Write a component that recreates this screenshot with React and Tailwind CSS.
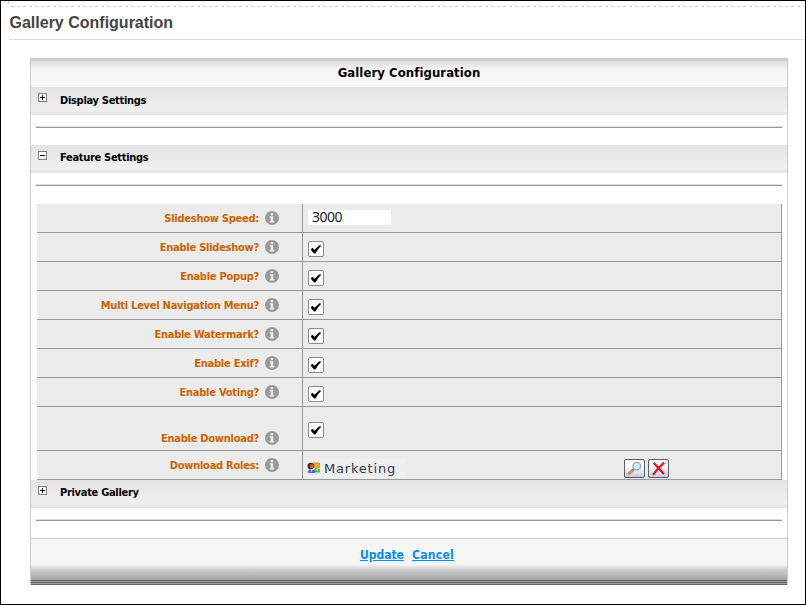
import React from "react";

const sans = "font-['DejaVu_Sans_Condensed','DejaVu_Sans',sans-serif]";

function Info() {
  return (
    <svg className="mb-px ml-[6px] block shrink-0" width="14" height="14" viewBox="0 0 14 14">
      <circle cx="7" cy="7" r="7" fill="#999" />
      <path d="M5.6 2.3h2.6v1.9H5.6zM4.7 5.3h3.5v4.8h1v1.3H4.7v-1.3h1V6.6h-1z" fill="#eee" />
    </svg>
  );
}

function Check() {
  return (
    <svg className="block" width="16" height="16" viewBox="0 0 16 16">
      <rect x="0.5" y="0.5" width="15" height="15" rx="1.5" fill="#fff" stroke="#8a8a8a" />
      <path d="M2.6 8.4 L4.3 6.8 L6.6 8.8 Q9 6 12 4 L13 5 Q9.6 8.2 7.4 12.4 L6 12.4 Z" fill="#000" />
    </svg>
  );
}

function Toggle({ open }) {
  return (
    <svg className="mt-[6px] block" width="9" height="9" viewBox="0 0 9 9" shapeRendering="crispEdges">
      <rect x="0.5" y="0.5" width="8" height="8" fill="#fff" stroke="#808080" />
      <path d={open ? "M2 4h5v1H2z" : "M2 4h5v1H2zM4 2h1v5H4z"} fill="#000" />
    </svg>
  );
}

function Section({ title, offset = "mt-[5px]", open }) {
  return (
    <div>
      <div className="flex h-7 border-b-[3px] border-[#e6e6e6] bg-linear-to-b from-[#e4e4e4] to-[#f0f0f0] pl-[7px]">
        <Toggle open={open} />
        <span className={`ml-[13px] text-[11px] leading-4 font-bold tracking-[-0.3px] whitespace-nowrap text-black ${sans} ${offset}`}>{title}</span>
      </div>
      <div className="mx-[5px] mt-[11px] h-[2px] border-t border-[#ddd] bg-[#999]" />
    </div>
  );
}

function Row({ label, height = "h-[29px]", labelPad = "pt-px", cellPad = "pt-[8px] pl-[5px]", children }) {
  return (
    <div className={`flex border-b border-[#999] ${height}`}>
      <div className={`flex w-[265px] items-center justify-end pr-[23px] ${labelPad}`}>
        <span className={`text-[11px] leading-4 font-bold tracking-[-0.25px] whitespace-nowrap text-[#cc6300] ${sans}`}>{label}</span>
        <Info />
      </div>
      <div className={`flex flex-1 items-start border-l border-[#999] ${cellPad}`}>{children}</div>
    </div>
  );
}

function People() {
  return (
    <svg className="block" width="13" height="12" viewBox="0 0 13 12">
      <path d="M7 10.5V7.5q0-1.5 2.5-1.5T13 7.5v3z" fill="#57b846" />
      <path d="M9 6.5h2.4L10.2 9z" fill="#fff" />
      <path d="M7.3 1h4.5q1 0 1 1.4v2.4q-.7 1.5-2.8 1.5T7.3 5z" fill="#edaa3c" stroke="#a86a20" strokeWidth=".6" />
      <path d="M1 11q-.4-4 3.4-4T8 11z" fill="#3f6fe0" />
      <path d="M3.2 7.3h2.6L4.6 10z" fill="#e8f6ff" />
      <circle cx="3.8" cy="4" r="3.3" fill="#472a23" />
      <circle cx="4.7" cy="4.2" r="2" fill="#e65b20" />
    </svg>
  );
}

function IconButton({ children }) {
  return (
    <span className="flex h-[19px] w-[21px] items-center justify-center rounded-[2px] border border-[#566060] bg-linear-to-b from-white from-35% to-[#c7c9e2]">
      {children}
    </span>
  );
}

export default function App() {
  return (
    <div className="h-[605px] w-[806px] overflow-hidden border border-black bg-white">
      <div className="ml-[7px] h-[5px] w-[797px]">
        <div className="h-[3px] w-px bg-[#ccc]" />
      </div>
      <div className="ml-[10px] h-px bg-[repeating-linear-gradient(90deg,#ccc_0_3px,transparent_3px_6px)]" />
      <h1 className="ml-2 h-[33px] border-b border-[#ddd] pt-[6px] pl-[0.5px] font-['Liberation_Sans',Arial,sans-serif] text-[16px] leading-5 font-bold text-[#444]">
        Gallery Configuration
      </h1>

      <div className="mt-[18px] ml-[29px] h-[527px] w-[758px] border-x border-[#ccc]">
        <div className="-mx-px h-[3px] bg-[#ccc]" />
        <h2 className={`h-[26px] bg-linear-to-b from-[#dcdcdc] to-[#f6f6f6] to-[9px] pt-[4px] text-center text-[13px] leading-4 font-bold text-black ${sans} tracking-[0.07px]`}>
          Gallery Configuration
        </h2>
        <Section title="Display Settings" offset="mt-[6px]" />
        <div className="h-[17px]" />
        <Section title="Feature Settings" open />

        <div className="mt-[18px] ml-[6px] w-[745px] border-r border-[#999] bg-[#ebebeb]">
          <Row label="Slideshow Speed:" cellPad="pt-[6px] pl-[5px]">
            <span className="flex h-[15px] w-[83px] items-center bg-white pb-[2px] pl-[4px] font-['Noto_Sans',sans-serif] text-[14px] leading-[15px] tracking-[-0.5px] text-[#222]">3000</span>
          </Row>
          <Row label="Enable Slideshow?"><Check /></Row>
          <Row label="Enable Popup?"><Check /></Row>
          <Row label="Multi Level Navigation Menu?"><Check /></Row>
          <Row label="Enable Watermark?"><Check /></Row>
          <Row label="Enable Exif?"><Check /></Row>
          <Row label="Enable Voting?"><Check /></Row>
          <Row label="Enable Download?" height="h-[44px]" labelPad="pt-[20px]" cellPad="pt-[15px] pl-[5px]"><Check /></Row>
          <Row label="Download Roles:" cellPad="pt-[7px] pl-px">
            <span className="flex h-[20px] w-[102px] items-center bg-[#eeeeee] pl-[3px]">
              <People />
              <span className="ml-[4px] pt-px font-['DejaVu_Sans',sans-serif] text-[13px] leading-4 tracking-[0.8px] text-[#333b4d]">Marketing</span>
            </span>
            <span className="mt-px mr-[112px] ml-auto flex gap-[3px]">
              <IconButton>
                <svg width="17" height="15" viewBox="0 0 17 15">
                  <path d="M2.8 12.8 L7 9" stroke="#cf8b3e" strokeWidth="2.8" strokeLinecap="round" />
                  <path d="M6.8 9.2 L8 8" stroke="#68758c" strokeWidth="1.8" />
                  <circle cx="10.8" cy="5.2" r="3.8" fill="#c9ebfa" stroke="#8dabc9" strokeWidth="1.3" />
                  <path d="M8.8 5q.5-2 2.5-2" fill="none" stroke="#fff" strokeWidth="1.2" />
                </svg>
              </IconButton>
              <IconButton>
                <svg width="17" height="15" viewBox="0 0 17 15">
                  <path d="M3.6 1.8 L14 13" stroke="#e0101a" strokeWidth="2.2" />
                  <path d="M14.2 1.6 Q8 6.5 3 13.8" fill="none" stroke="#ea1018" strokeWidth="2.2" />
                </svg>
              </IconButton>
            </span>
          </Row>
        </div>

        <Section title="Private Gallery" />
        <div className={`mt-[17px] flex h-[27px] justify-center gap-2 border-t border-[#ccc] bg-[#f6f6f6] pt-[8px] pr-[4px] text-[12px] leading-4 font-bold text-[#0a8cf0] ${sans}`}>
          <a className="underline">Update</a>
          <a className="tracking-[0.3px] underline">Cancel</a>
        </div>
        <div className="h-[15px] bg-linear-to-b from-[#f2f2f2] via-[#cfcfcf] via-30% to-[#a2a2a2]" />
        <div className="h-[5px] bg-[repeating-linear-gradient(180deg,#666_0_1px,#999_1px_2px)]" />
      </div>
    </div>
  );
}
